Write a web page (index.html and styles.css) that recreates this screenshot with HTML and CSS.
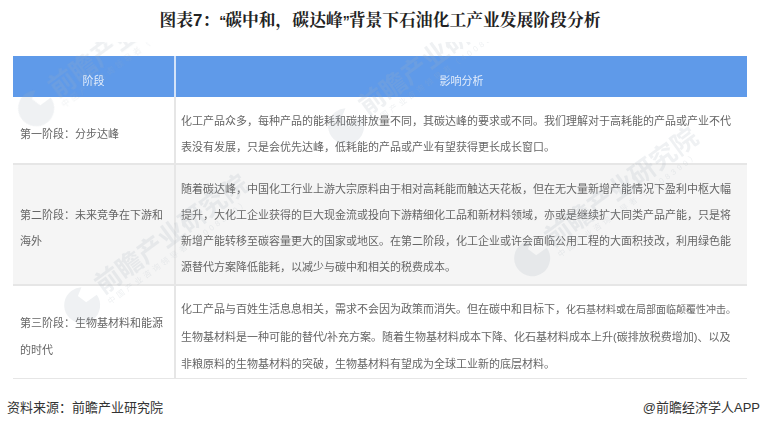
FILE: index.html
```html
<!DOCTYPE html>
<html lang="zh-CN">
<head>
<meta charset="utf-8">
<title>图表7</title>
<link rel="stylesheet" href="styles.css">
</head>
<body>
<div class="page">
  <h1 class="title">图表7：<span class="quote">“</span>碳中和，碳达峰<span class="quote">”</span>背景下石油化工产业发展阶段分析</h1>
  <div class="sheet">
    <table class="grid">
      <thead>
        <tr class="head"><th class="stage">阶段</th><th>影响分析</th></tr>
      </thead>
      <tbody>
        <tr class="row-a">
          <td class="stage">第一阶段：分步达峰</td>
          <td>化工产品众多，每种产品的能耗和碳排放量不同，其碳达峰的要求或不同。我们理解对于高耗能的产品或产业不代<br>表没有发展，只是会优先达峰，低耗能的产品或产业有望获得更长成长窗口。</td>
        </tr>
        <tr class="row-b">
          <td class="stage">第二阶段：未来竞争在下游和<br>海外</td>
          <td>随着碳达峰，中国化工行业上游大宗原料由于相对高耗能而触达天花板，但在无大量新增产能情况下盈利中枢大幅<br>提升，大化工企业获得的巨大现金流或投向下游精细化工品和新材料领域，亦或是继续扩大同类产品产能，只是将<br>新增产能转移至碳容量更大的国家或地区。在第二阶段，化工企业或许会面临公用工程的大面积技改，利用绿色能<br>源替代方案降低能耗，以减少与碳中和相关的税费成本。</td>
        </tr>
        <tr class="row-c">
          <td class="stage">第三阶段：生物基材料和能源<br>的时代</td>
          <td>化工产品与百姓生活息息相关，需求不会因为政策而消失。但在碳中和目标下，<span class="tight">化石基材料或在局部面临颠覆性冲击。</span><br>生物基材料是一种可能的替代/补充方案。随着生物基材料成本下降、化石基材料成本上升(碳排放税费增加)、以及<br>非粮原料的生物基材料的突破，生物基材料有望成为全球工业新的底层材料。</td>
        </tr>
      </tbody>
    </table>
    <div class="marks" aria-hidden="true">
      <div class="mark m1"><svg class="logo" viewBox="0 0 40 40"><path d="M20 2A18 18 0 1 0 38 20L25 20L22 10L30 5A18 18 0 0 0 20 2Z"/></svg><div class="mark-text"><span class="mark-name">前瞻产业研究院</span><span class="mark-sub">中国产业咨询领导者（4008399）</span></div></div>
      <div class="mark m2"><svg class="logo" viewBox="0 0 40 40"><path d="M20 2A18 18 0 1 0 38 20L25 20L22 10L30 5A18 18 0 0 0 20 2Z"/></svg><div class="mark-text"><span class="mark-name">前瞻产业研究院</span><span class="mark-sub">中国产业咨询领导者（4008399）</span></div></div>
      <div class="mark m3"><svg class="logo" viewBox="0 0 40 40"><path d="M20 2A18 18 0 1 0 38 20L25 20L22 10L30 5A18 18 0 0 0 20 2Z"/></svg><div class="mark-text"><span class="mark-name">前瞻产业研究院</span><span class="mark-sub">中国产业咨询领导者（4008399）</span></div></div>
      <div class="mark m4"><svg class="logo" viewBox="0 0 40 40"><path d="M20 2A18 18 0 1 0 38 20L25 20L22 10L30 5A18 18 0 0 0 20 2Z"/></svg><div class="mark-text"><span class="mark-name">前瞻产业研究院</span><span class="mark-sub">中国产业咨询领导者（4008399）</span></div></div>
    </div>
  </div>
  <div class="foot">
    <span>资料来源：前瞻产业研究院</span>
    <span>@前瞻经济学人APP</span>
  </div>
</div>
</body>
</html>
```
FILE: styles.css
```css
html, body { margin: 0; padding: 0; background: #fff; }
body { width: 760px; height: 428px; overflow: hidden; font-family: "Liberation Sans", "Noto Sans CJK SC", sans-serif; }
.page { display: flex; flex-direction: column; width: 760px; height: 428px; }
.title { margin: 0; height: 42px; line-height: 42px; font-size: 16.8px; font-weight: 700; color: #222; text-align: center; font-family: "Liberation Sans", "Noto Serif CJK SC", "Noto Sans CJK SC", serif; white-space: nowrap; }
.quote { font-size: 14px; letter-spacing: -3px; margin-right: 2px; }
.sheet { position: relative; height: 337px; padding: 14px 13px 0; overflow: hidden; box-sizing: border-box; }
.grid { width: 734px; border-collapse: collapse; table-layout: fixed; font-size: 11px; color: #666; filter: blur(.35px); }
.grid th, .grid td { box-sizing: border-box; padding: 7px 0 0 5px; font-weight: 400; white-space: nowrap; line-height: 26px; }
.grid th { height: 41px; background: #5f9ae9; color: #e3edfb; text-align: center; padding: 8px 0 0; border-left: 2px solid #d4e3f8; }
.grid th:first-child, .grid td:first-child { border-left: 0; padding-left: 7px; }
.grid th:first-child { padding-left: 0; }
.grid td { border-left: 2px solid #e6e6e6; border-bottom: 2px solid #e6e6e6; }
.stage { width: 162px; }
.row-a td { height: 67px; }
.row-b td { height: 121px; background: #f5f5f5; }
.row-c td { height: 94px; line-height: 26.7px; padding-top: 10px; }
.tight { font-size: 10px; }
.marks { position: absolute; inset: 0; pointer-events: none; filter: blur(.4px); }
.mark { position: absolute; display: flex; align-items: center; gap: 3px; transform-origin: left center; transform: rotate(-36deg); color: rgba(165,175,190,.18); white-space: nowrap; }
.logo { width: 40px; height: 40px; fill: rgba(165,175,190,.18); flex: none; }
.mark-text { display: flex; flex-direction: column; }
.mark-name { font-size: 26px; line-height: 28px; font-weight: 700; }
.mark-sub { font-size: 8px; line-height: 10px; letter-spacing: 3px; }
.m1 { left: 20px; top: 58px; }
.m2 { left: 330px; top: 76px; }
.m3 { left: 66px; top: 255px; }
.m4 { left: 516px; top: 208px; }
.foot { display: flex; justify-content: space-between; padding-left: 7px; font-size: 13px; line-height: 16px; color: #333; margin-top: 21px; }
```
